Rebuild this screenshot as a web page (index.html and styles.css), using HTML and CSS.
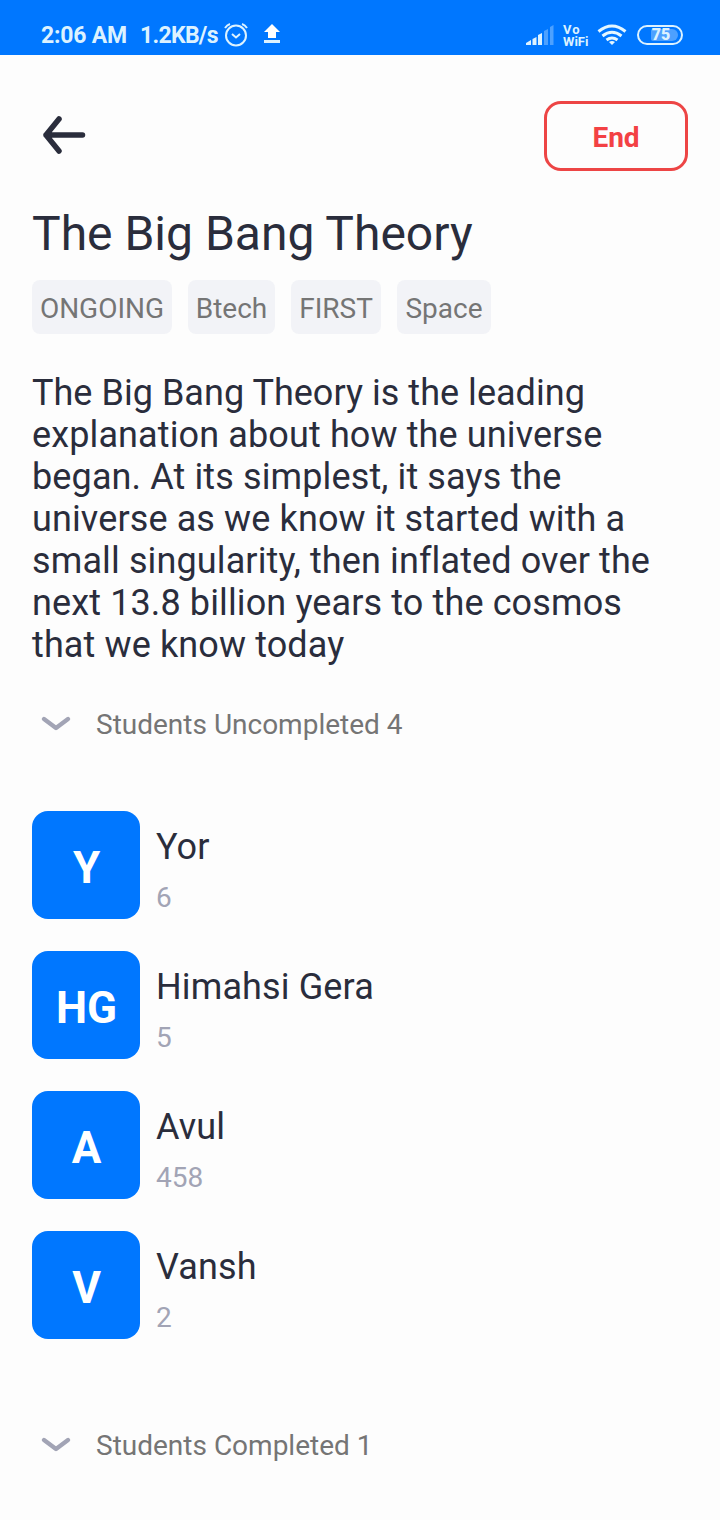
FILE: index.html
```html
<!DOCTYPE html>
<html lang="en"><head><meta charset="utf-8"><title>The Big Bang Theory</title><link rel="stylesheet" href="styles.css"></head>
<body>
<header class="status">
<span class="time">2:06 AM</span><span class="speed">1.2KB/s</span>
<svg class="alarm" width="24" height="26" viewBox="0 0 24 26" fill="none" stroke="#dcf2ff" stroke-width="2"><circle cx="12" cy="13.500" r="10"/><path d="M1 6Q3 3 6 2M23 6q-2-3-5-4M8 12l4 3.500 4-3.500"/></svg>
<svg class="upload" width="18" height="20" viewBox="0 0 18 20"><path fill="#fff" d="M9 0l8 8h-4v6H5V8H1z"/><path fill="#dcf2ff" d="M1 16h16v3H1z"/></svg>
<svg class="signal" width="28" height="20" viewBox="0 0 28 20" fill="#dcf2ff"><path d="M0 18l5-3v5H0zM6.500 14l4-2v8h-4zM12 10l4-2v12h-4z"/><path opacity=".35" d="M18 6l4-2v16h-4zM24 2l3.500-2v20H24z"/></svg>
<span class="vowifi"><span class="vo">Vo</span><span>WiFi</span></span>
<svg class="wifi" width="30" height="22" viewBox="0 0 30 22" fill="none" stroke="#e5f7ff" stroke-width="3"><path d="M1.500 7.500Q15-3.500 28.500 7.500M5.500 12q9.500-7.500 19 0M9.500 16q5.500-4 11 0"/><path d="M12 18q3-2 6 0l-3 3z" fill="#e5f7ff" stroke="none"/></svg>
<span class="battery"><b>75</b></span>
</header>
<main>
<div class="toolbar"><svg class="back" width="44" height="40" viewBox="0 0 44 40" fill="none" stroke="#2a2d3c" stroke-width="5.500" stroke-linecap="round" stroke-linejoin="round"><path d="M17 3L4 19l13 16M4 19h36.500"/></svg><button class="end">End</button></div>
<h1>The Big Bang Theory</h1>
<div class="tags"><span class="t1">ONGOING</span><span class="t2">Btech</span><span class="t3">FIRST</span><span class="t4">Space</span></div>
<p class="description"><span class="lead">The Big Bang Theory is the leading</span><br>explanation about how the universe<br>began. At its simplest, it says the<br>universe as we know it started with a<br>small singularity, then inflated over the<br>next 13.8 billion years to the cosmos<br>that we know today</p>
<div class="section"><svg width="30" height="18" viewBox="0 0 30 18"><path d="M3 4l12 9L27 4"/></svg><span>Students Uncompleted 4</span></div>
<div class="students">
<div class="student"><b class="avatar">Y</b><div><div class="name">Yor</div><div class="roll">6</div></div></div>
<div class="student"><b class="avatar">HG</b><div><div class="name">Himahsi Gera</div><div class="roll">5</div></div></div>
<div class="student"><b class="avatar">A</b><div><div class="name">Avul</div><div class="roll">458</div></div></div>
<div class="student"><b class="avatar">V</b><div><div class="name">Vansh</div><div class="roll">2</div></div></div>
</div>
<div class="section"><svg width="30" height="18" viewBox="0 0 30 18"><path d="M3 4l12 9L27 4"/></svg><span>Students Completed 1</span></div>
</main></body></html>
```

FILE: styles.css
```css
*{box-sizing:border-box}
body{margin:0;width:720px;height:1520px;overflow:hidden;background:#fdfdfd;color:#2a2d3c;font-family:Roboto,sans-serif}
.status{height:55px;background:#0077ff;color:#dcf2ff;display:flex;align-items:center;padding:16px 37px 0 41px;font-size:23px;font-weight:700}
.time{width:99px;white-space:nowrap;letter-spacing:-.2px}.speed{width:84px;white-space:nowrap;letter-spacing:-.7px}
.alarm{margin-top:-2px}
.upload{margin-left:15px;margin-top:-3px}.signal{margin-left:auto;margin-top:-1px}
.vowifi{display:flex;flex-direction:column;width:26px;font-size:13px;line-height:12px;margin-left:9px}
.vo{letter-spacing:1px}
.wifi{margin-left:8px;margin-top:-1px}
.battery{width:46px;height:20px;border:2px solid #dcf2ff;border-radius:10px;margin-left:10px;display:flex;justify-content:center;align-items:center;font-size:16px;margin-top:-1px}
.battery b{height:12px;line-height:12px;padding:0 8px 0 1px;margin-left:9px;border-radius:2px 6px 6px 2px;background:#4da0ff}
main{padding:46px 32px 0}
.toolbar{height:70px;display:flex;justify-content:space-between;align-items:center}
.back{margin-left:10px}
.end{width:144px;height:70px;border:3px solid #ed4545;border-radius:17px;background:transparent;color:#f34144;font:700 28px Roboto,sans-serif;padding:2px 0 0}
h1{margin:34px 0 0;height:58px;line-height:58px;font-size:48px;font-weight:400;white-space:nowrap}
.tags{display:flex;gap:16px;margin-top:17px}
.tags span{height:54px;border-radius:8px;background:#f2f3f7;color:#757575;font-size:28px;line-height:57px;text-align:center;white-space:nowrap}
.t1{width:140px}.t2{width:87px}.t3{width:90px}.t4{width:94px}
.description{font-size:36px;line-height:42px;margin:38px 0 0;letter-spacing:.12px;white-space:nowrap}
.lead{letter-spacing:.03px}
.section{display:flex;align-items:center;height:40px;margin-top:38px;padding-left:9px;gap:25px;font-size:28px;color:#757575;white-space:nowrap}
.section path{fill:none;stroke:#a2a4b5;stroke-width:4.3;stroke-linecap:round;stroke-linejoin:round}
.students{display:flex;flex-direction:column;gap:32px;margin:67px 0 86px}
.student{height:108px;display:flex;gap:16px}
.avatar{width:108px;height:108px;border-radius:16px;background:#0077ff;color:#fff;display:flex;align-items:center;justify-content:center;font-size:44px;padding:6px 0 0 1px}
.name{font-size:36px;line-height:42px;margin-top:15px;letter-spacing:.13px}
.roll{font-size:28px;line-height:34px;margin-top:13px;color:#a2a4b5}
```
